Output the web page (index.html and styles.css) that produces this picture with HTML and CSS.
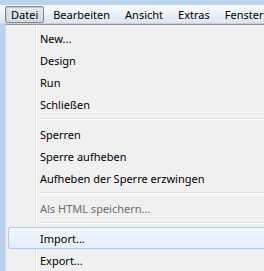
FILE: index.html
```html
<!DOCTYPE html>
<html>
<head>
<meta charset="utf-8">
<link rel="stylesheet" href="styles.css">
</head>
<body>
<div class="titlestrip"></div>
<div class="menubar">
  <span class="mb-item pressed">Datei</span>
  <span class="mb-item">Bearbeiten</span>
  <span class="mb-item">Ansicht</span>
  <span class="mb-item">Extras</span>
  <span class="mb-item">Fenster</span>
</div>
<div class="main">
  <div class="frame"></div>
  <div class="popup">
    <div class="gutter"></div>
    <div class="items">
      <div class="item">New...</div>
      <div class="item">Design</div>
      <div class="item">Run</div>
      <div class="item">Schließen</div>
      <div class="sep"></div>
      <div class="item">Sperren</div>
      <div class="item">Sperre aufheben</div>
      <div class="item">Aufheben der Sperre erzwingen</div>
      <div class="sep"></div>
      <div class="item disabled">Als HTML speichern...</div>
      <div class="sep"></div>
      <div class="item hover">Import...</div>
      <div class="item">Export...</div>
    </div>
  </div>
</div>
</body>
</html>
```

FILE: styles.css
```css
html, body {
  margin: 0;
  padding: 0;
  width: 264px;
  height: 271px;
  overflow: hidden;
  font-family: "Noto Sans", "Open Sans", sans-serif;
  font-size: 11px;
  color: #000;
  background: #b9d1ea;
}
.titlestrip {
  height: 5px;
  background: #bcd3ec;
}
.menubar {
  height: 19px;
  display: flex;
  align-items: center;
  padding-left: 5px;
  background: linear-gradient(#fbfcfe, #dde5f3);
  border-bottom: 1px solid #c6d0de;
  box-sizing: border-box;
  white-space: nowrap;
  overflow: hidden;
}
.mb-item {
  height: 17px;
  line-height: 15px;
  padding: 0 5px;
  margin-right: 3px;
  border: 1px solid transparent;
  border-radius: 2px;
  box-sizing: border-box;
  flex: none;
}
.mb-item.pressed {
  border-color: #7f8893;
  background: linear-gradient(#e6e9ee, #d3d9e3);
  box-shadow: inset 1px 1px 0 rgba(0,0,0,0.12);
}
.main {
  display: flex;
  height: 247px;
}
.frame {
  width: 5px;
  background: #b9d1ea;
  flex: none;
}
.popup {
  flex: 1;
  position: relative;
  background: #f0f0f0;
  border-left: 1px solid #d6dbe3;
  border-top: 1px solid #979797;
  padding: 2px 0 0 2px;
  display: flex;
}
.gutter {
  position: absolute;
  left: 29px;
  top: 0;
  bottom: 0;
  width: 1px;
  background: #e2e3e3;
  border-right: 1px solid #ffffff;
}
.items {
  flex: 1;
  position: relative;
}
.item {
  height: 22px;
  line-height: 22px;
  padding-left: 31px;
  border: 1px solid transparent;
  border-right: none;
  border-radius: 3px 0 0 3px;
  box-sizing: border-box;
  white-space: nowrap;
}
.item.disabled {
  color: #6d6d6d;
}
.item.hover {
  border-color: #aeccf2;
  background: linear-gradient(#f2f6fc, #e4edf8);
}
.sep {
  height: 8px;
  margin-left: 30px;
  display: flex;
  flex-direction: column;
  justify-content: center;
}
.sep::before {
  content: "";
  display: block;
  height: 1px;
  background: #e0e0e0;
  border-bottom: 1px solid #ffffff;
}
```
